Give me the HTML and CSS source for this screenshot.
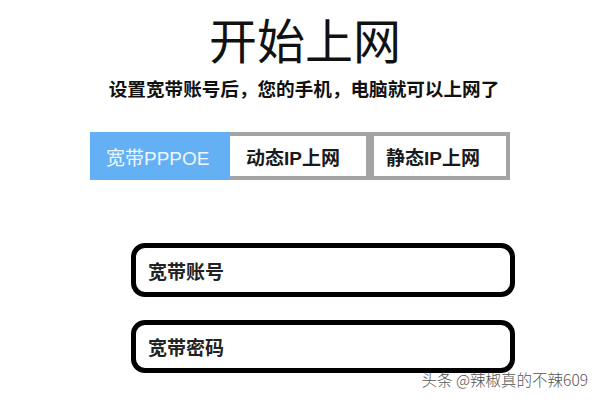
FILE: index.html
```html
<!DOCTYPE html>
<html lang="zh-CN">
<head>
<meta charset="utf-8">
<title>开始上网</title>
<link rel="stylesheet" href="styles.css">
</head>
<body>
<main class="page">
  <h1 class="title">开始上网</h1>
  <p class="subtitle">设置宽带账号后，您的手机，电脑就可以上网了</p>
  <div class="tabs">
    <div class="tab active">宽带PPPOE</div>
    <div class="tab">动态IP上网</div>
    <div class="tab">静态IP上网</div>
  </div>
  <div class="fields">
    <div class="field">宽带账号</div>
    <div class="field">宽带密码</div>
  </div>
  <div class="watermark">头条 @辣椒真的不辣609</div>
</main>
</body>
</html>
```
FILE: styles.css
```css
* { box-sizing: border-box; }
html, body { margin: 0; padding: 0; background: #fff; }
body {
  width: 600px;
  height: 400px;
  overflow: hidden;
  font-family: "Liberation Sans", "Noto Sans CJK SC", sans-serif;
  color: #111;
}
.page {
  position: relative;
  width: 600px;
  height: 400px;
  display: flex;
  flex-direction: column;
  align-items: center;
}
.title {
  margin: 10px 0 0 10px;
  font-family: "Noto Sans CJK SC", sans-serif;
  font-size: 48px;
  line-height: 56px;
  font-weight: 400;
  color: #111;
}
.subtitle {
  margin: 10px 0 0 8px;
  font-family: "Noto Sans CJK SC", sans-serif;
  font-size: 18.6px;
  line-height: 24px;
  font-weight: 700;
  color: #111;
}
.tabs {
  display: flex;
  margin-top: 32px;
}
.tab {
  width: 140px;
  height: 48px;
  border: 4px solid #a4a4a4;
  padding: 0 12px;
  display: flex;
  align-items: center;
  font-size: 19px;
  font-weight: 700;
  color: #1a1a1a;
  background: #fff;
}
.tab.active {
  background: #64b0f4;
  border-color: #64b0f4;
  color: #eef6fe;
  font-weight: 400;
}
.tab.active + .tab {
  border-left: 0;
  padding-left: 16px;
}
.fields {
  display: flex;
  flex-direction: column;
  gap: 23px;
  margin: 63px 0 0 46px;
}
.field {
  width: 384px;
  height: 54px;
  border: 5px solid #000;
  border-radius: 14px;
  padding-left: 12px;
  display: flex;
  align-items: center;
  font-size: 19px;
  font-weight: 700;
  color: #222;
}
.field + .field { height: 53px; }
.watermark {
  position: absolute;
  right: 12px;
  top: 369px;
  font-family: "Noto Sans CJK SC", sans-serif;
  font-size: 15.5px;
  line-height: 20px;
  color: #555;
  font-weight: 300;
}
```
